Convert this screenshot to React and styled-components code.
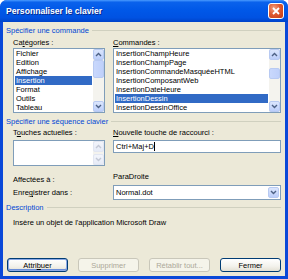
import styled, { createGlobalStyle } from "styled-components";

const GlobalStyle = createGlobalStyle`
  html, body {
    margin: 0;
    padding: 0;
    background: #ffffff;
  }
  body {
    font-family: "Liberation Sans", Arial, sans-serif;
    font-size: 7.5px;
    color: #000;
  }
`;

const Window = styled.div`
  width: 288px;
  height: 279px;
  box-sizing: border-box;
  display: flex;
  flex-direction: column;
  background: #0a48d8;
  border-radius: 7px 7px 0 0;
  overflow: hidden;
`;

const TitleBar = styled.div`
  height: 22px;
  flex-shrink: 0;
  display: flex;
  align-items: center;
  justify-content: space-between;
  padding: 0 4px 0 6px;
  background: linear-gradient(
    180deg,
    #4a9bff 0%,
    #0a62ec 10%,
    #0058e8 45%,
    #0052e2 80%,
    #0043c9 100%
  );
`;

const Title = styled.span`
  color: #fff;
  font-weight: bold;
  font-size: 8.6px;
  text-shadow: 1px 1px 0 #0a2a8a;
`;

const CloseButton = styled.div`
  width: 14px;
  height: 14px;
  border: 1px solid #fff;
  border-radius: 3px;
  background: radial-gradient(circle at 35% 30%, #f0a080 0%, #e05a30 45%, #c23b14 100%);
  display: flex;
  align-items: center;
  justify-content: center;
`;

const Client = styled.div`
  flex: 1;
  margin: 0 3px 3px 3px;
  background: #ece9d8;
  display: flex;
  flex-direction: column;
  padding: 4px 4px 4px 3px;
`;

const GroupHeader = styled.div`
  display: flex;
  align-items: center;
  height: 9px;
  margin-top: ${(p) => p.$mt || 0}px;
  color: #0046d5;
  white-space: nowrap;
  &::after {
    content: "";
    flex: 1;
    height: 1px;
    margin-left: 3px;
    background: #d0d0bf;
  }
`;

const Columns = styled.div`
  display: grid;
  grid-template-columns: 92px 168px;
  column-gap: 8px;
  margin-left: 7px;
  margin-top: ${(p) => p.$mt || 0}px;
  align-items: ${(p) => p.$align || "start"};
`;

const Label = styled.div`
  height: 9px;
  line-height: 9px;
  white-space: nowrap;
  align-self: ${(p) => p.$self || "auto"};
`;

const ListBox = styled.div`
  display: flex;
  height: ${(p) => p.$h}px;
  box-sizing: border-box;
  border: 1px solid #7f9db9;
  background: #fff;
  margin-top: ${(p) => p.$mt || 0}px;
`;

const Items = styled.div`
  flex: 1;
  padding: 0 1px 0 1px;
  overflow: hidden;
`;

const Item = styled.div`
  height: 9px;
  line-height: 9px;
  padding-left: 1px;
  white-space: nowrap;
  overflow: hidden;
  background: ${(p) => (p.$sel ? "#316ac5" : "transparent")};
  color: ${(p) => (p.$sel ? "#fff" : "#000")};
`;

const Scroll = styled.div`
  width: 11px;
  flex-shrink: 0;
  display: flex;
  flex-direction: column;
  background: #f4f3ee;
  position: relative;
`;

const ArrowBtn = styled.div`
  height: 11px;
  box-sizing: border-box;
  border: 1px solid ${(p) => (p.$off ? "#e2e6f2" : "#b8caf2")};
  border-radius: 2px;
  background: ${(p) =>
    p.$off
      ? "linear-gradient(180deg, #f3f5fb, #e6ebf7)"
      : "linear-gradient(180deg, #dbe6fd, #bccefa)"};
  display: flex;
  align-items: center;
  justify-content: center;
`;

const Track = styled.div`
  flex: 1;
  position: relative;
`;

const Thumb = styled.div`
  position: absolute;
  left: 0;
  right: 0;
  box-sizing: border-box;
  border: 1px solid #b8caf2;
  border-radius: 2px;
  background: linear-gradient(90deg, #c9d8fc, #bfd0fa);
`;

const Chevron = ({ up, off }) => (
  <svg width="7" height="5" viewBox="0 0 7 5">
    <polyline
      points={up ? "1,4 3.5,1.5 6,4" : "1,1 3.5,3.5 6,1"}
      fill="none"
      stroke={off ? "#c3c8d6" : "#4d6185"}
      strokeWidth="1.4"
    />
  </svg>
);

const ScrollBar = ({ thumbTop, thumbHeight, off }) => (
  <Scroll>
    <ArrowBtn $off={off}>
      <Chevron up off={off} />
    </ArrowBtn>
    <Track>
      {thumbHeight ? (
        <Thumb style={{ top: thumbTop, height: thumbHeight }} />
      ) : null}
    </Track>
    <ArrowBtn $off={off}>
      <Chevron off={off} />
    </ArrowBtn>
  </Scroll>
);

const TextBox = styled.div`
  height: ${(p) => p.$h}px;
  box-sizing: border-box;
  border: 1px solid #7f9db9;
  background: #fff;
  display: flex;
  align-items: center;
  padding-left: 2px;
  white-space: nowrap;
`;

const Caret = styled.span`
  display: inline-block;
  width: 1px;
  height: 9px;
  background: #000;
  vertical-align: middle;
`;

const Combo = styled(TextBox)`
  justify-content: space-between;
  padding-right: 1px;
`;

const DropBtn = styled.div`
  width: 11px;
  height: 11px;
  box-sizing: border-box;
  border: 1px solid #b8caf2;
  border-radius: 2px;
  background: linear-gradient(180deg, #dbe6fd, #bccefa);
  display: flex;
  align-items: center;
  justify-content: center;
`;

const Description = styled.div`
  margin: 6px 0 0 7px;
  height: 9px;
  line-height: 9px;
  white-space: nowrap;
`;

const ButtonRow = styled.div`
  margin-top: auto;
  display: flex;
  justify-content: space-between;
  padding: 0 0 0 1px;
`;

const Button = styled.div`
  width: 61px;
  height: 14px;
  box-sizing: border-box;
  border: 1px solid ${(p) => (p.$disabled ? "#c9c7ba" : "#003c74")};
  border-radius: 3px;
  display: flex;
  align-items: center;
  justify-content: center;
  color: ${(p) => (p.$disabled ? "#aca899" : "#000")};
  background: ${(p) =>
    p.$disabled
      ? "#f5f4ea"
      : "linear-gradient(180deg, #ffffff 0%, #f3f2ec 60%, #e3e0d4 100%)"};
  box-shadow: ${(p) =>
    p.$default ? "inset 0 0 0 1px #8aa8e6, inset 0 -1px 0 1px #6b8ed8" : "none"};
`;

const U = styled.span`
  text-decoration: underline;
`;

const categories = ["Fichier", "Edition", "Affichage", "Insertion", "Format", "Outils", "Tableau"];
const commands = [
  "InsertionChampHeure",
  "InsertionChampPage",
  "InsertionCommandeMasquéeHTML",
  "InsertionComposantWeb",
  "InsertionDateHeure",
  "InsertionDessin",
  "InsertionDessinOffice",
];

export default function App() {
  return (
    <>
      <GlobalStyle />
      <Window>
        <TitleBar>
          <Title>Personnaliser le clavier</Title>
          <CloseButton>
            <svg width="8" height="8" viewBox="0 0 8 8">
              <path d="M1 1 L7 7 M7 1 L1 7" stroke="#fff" strokeWidth="1.8" />
            </svg>
          </CloseButton>
        </TitleBar>
        <Client>
          <GroupHeader>Spécifier une commande</GroupHeader>
          <Columns $mt={3}>
            <Label>
              Ca<U>t</U>égories :
            </Label>
            <Label>
              <U>C</U>ommandes :
            </Label>
          </Columns>
          <Columns $mt={1}>
            <ListBox $h={65}>
              <Items>
                {categories.map((c) => (
                  <Item key={c} $sel={c === "Insertion"}>
                    {c}
                  </Item>
                ))}
              </Items>
              <ScrollBar thumbTop={0} thumbHeight={18} />
            </ListBox>
            <ListBox $h={65}>
              <Items>
                {commands.map((c) => (
                  <Item key={c} $sel={c === "InsertionDessin"}>
                    {c}
                  </Item>
                ))}
              </Items>
              <ScrollBar thumbTop={8} thumbHeight={11} />
            </ListBox>
          </Columns>

          <GroupHeader $mt={4}>Spécifier une séquence clavier</GroupHeader>
          <Columns $mt={2}>
            <Label>
              T<U>o</U>uches actuelles :
            </Label>
            <Label>
              <U>N</U>ouvelle touche de raccourci :
            </Label>
          </Columns>
          <Columns $mt={3}>
            <ListBox $h={26}>
              <Items />
              <ScrollBar off />
            </ListBox>
            <TextBox $h={13}>
              Ctrl+Maj+D
              <Caret />
            </TextBox>
          </Columns>
          <Columns $mt={6}>
            <Label style={{ marginTop: 3 }}>Affectées à :</Label>
            <Label>ParaDroite</Label>
          </Columns>
          <Columns $mt={1} $align="center">
            <Label>
              Enre<U>g</U>istrer dans :
            </Label>
            <Combo $h={15}>
              Normal.dot
              <DropBtn>
                <Chevron />
              </DropBtn>
            </Combo>
          </Columns>

          <GroupHeader $mt={3}>Description</GroupHeader>
          <Description>Insère un objet de l'application Microsoft Draw</Description>

          <ButtonRow>
            <Button $default>
              Attri<U>b</U>uer
            </Button>
            <Button $disabled>Supprimer</Button>
            <Button $disabled>Rétablir tout...</Button>
            <Button>Fermer</Button>
          </ButtonRow>
        </Client>
      </Window>
    </>
  );
}
